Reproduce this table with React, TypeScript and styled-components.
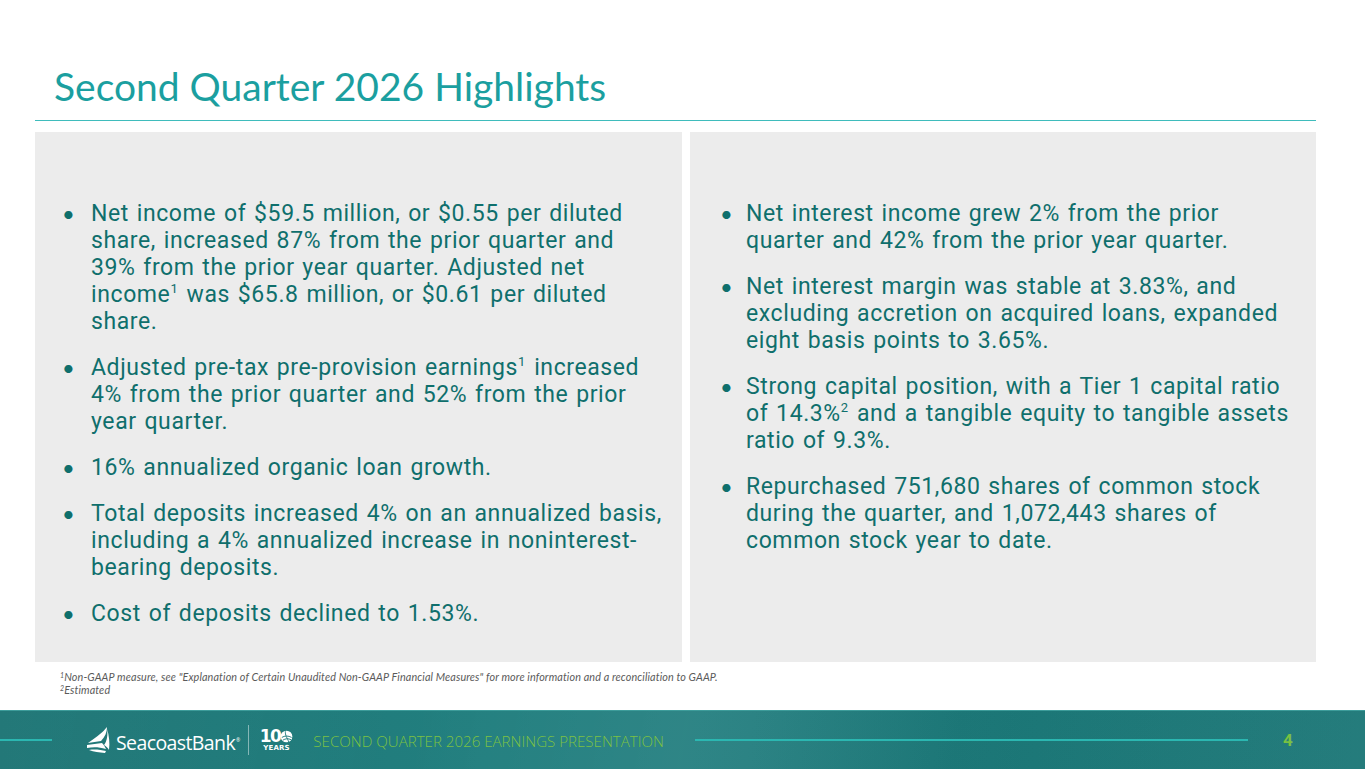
import React from "react";
import styled, { createGlobalStyle } from "styled-components";

const Global = createGlobalStyle`
  html, body { margin: 0; padding: 0; background: #ffffff; }
  body { font-family: Lato, "Open Sans", sans-serif; font-variant-ligatures: none; }
  * { box-sizing: border-box; }
`;

const Slide = styled.div`
  width: 1365px;
  height: 769px;
  display: flex;
  flex-direction: column;
  overflow: hidden;
  background: #ffffff;
`;

const Header = styled.header`
  margin: 0 49px 0 35px;
  height: 121px;
  display: flex;
  align-items: flex-end;
  padding: 0 0 10px 19px;
  border-bottom: 1.5px solid #3fbcbc;
`;

const Title = styled.h1`
  margin: 0;
  font-family: Lato, sans-serif;
  font-weight: 400;
  font-size: 39px;
  line-height: 47px;
  color: #1b9fa0;
`;

const Panels = styled.section`
  margin: 11px 49px 0 35px;
  height: 530px;
  display: grid;
  grid-template-columns: 647px 626px;
  gap: 8px;
`;

const Panel = styled.div<{ $pad: number }>`
  background: #ececec;
  padding: 68px 0 0 ${(p) => p.$pad}px;
  display: flex;
  flex-direction: column;
  gap: 19px;
`;

const Item = styled.div<{ $col: number }>`
  display: grid;
  grid-template-columns: ${(p) => p.$col}px 1fr;
  font-family: Roboto, Lato, sans-serif;
  font-size: 23px;
  line-height: 27px;
  letter-spacing: 0.6px;
  word-spacing: 1.5px;
  color: #0f6f6c;
  white-space: nowrap;
`;

const Bullet = styled.span`
  font-family: Lato, sans-serif;
  font-size: 22px;
  line-height: 27px;
`;

const Sup = styled.sup`
  font-size: 13px;
  line-height: 0;
  letter-spacing: 0;
  vertical-align: 9px;
  margin-right: 1px;
`;

const Notes = styled.div`
  margin: 8px 0 0 60px;
  font-family: Lato, sans-serif;
  font-style: italic;
  font-size: 10.8px;
  line-height: 13px;
  letter-spacing: 0.12px;
  color: #5a5a5a;
`;

const NoteSup = styled.sup`
  font-size: 7px;
  line-height: 0;
  vertical-align: 3px;
`;

const Footer = styled.footer`
  margin-top: auto;
  height: 59px;
  border-top: 1px solid #3d9c9a;
  background:
    linear-gradient(100deg, rgba(255,255,255,0.03) 0%, rgba(255,255,255,0) 30%, rgba(255,255,255,0.05) 50%, rgba(0,0,0,0.03) 70%, rgba(255,255,255,0.04) 100%),
    linear-gradient(90deg, #1c7474 0%, #227f7f 35%, #247f80 55%, #1b7979 75%, #1c7777 100%);
  display: flex;
  align-items: center;
`;

const Rule = styled.div<{ $w: number; $ml?: number }>`
  width: ${(p) => p.$w}px;
  margin-left: ${(p) => p.$ml ?? 0}px;
  height: 2px;
  background: #2bb7b1;
  flex: none;
`;

const Logo = styled.div`
  margin-left: 33px;
  display: flex;
  align-items: center;
  gap: 3px;
  color: #ffffff;
`;

const LogoWord = styled.span`
  font-family: "Open Sans", sans-serif;
  font-size: 19.5px;
  font-weight: 500;
  letter-spacing: -0.6px;
  color: #ffffff;
  position: relative;
  top: 2px;
`;

const Tm = styled.span`
  font-size: 5px;
  vertical-align: 8px;
  margin-left: 1px;
`;

const Divider = styled.div`
  width: 1px;
  height: 30px;
  background: rgba(255,255,255,0.45);
  margin: 0 8px 0 5px;
`;

const Years = styled.div`
  display: flex;
  flex-direction: column;
  align-items: center;
  color: #ffffff;
  font-family: "DejaVu Sans", sans-serif;
  font-weight: 700;
`;

const YearsNum = styled.div`
  display: flex;
  align-items: center;
  font-size: 17px;
  line-height: 16px;
  letter-spacing: -1.5px;
`;

const YearsLabel = styled.div`
  font-size: 7px;
  line-height: 8px;
  letter-spacing: 0.2px;
`;

const FooterTitle = styled.span`
  margin-left: 20px;
  font-family: "Open Sans", sans-serif;
  font-weight: 300;
  font-size: 15.1px;
  color: #7cc143;
  white-space: nowrap;
  position: relative;
  top: 1px;
`;

const PageNum = styled.span`
  margin-left: 35px;
  font-family: "Liberation Sans Narrow", "Roboto", sans-serif;
  font-weight: 700;
  font-size: 17px;
  color: #78c043;
`;

const Sail = () => (
  <svg width="28" height="28" viewBox="0 0 28 28" aria-hidden="true">
    <path d="M22 1 C18 6 13 10 3 17 L16 15 C20 11 22 6 22 1 Z" fill="#ffffff" />
    <path d="M2 19 L17 17 C19 19 20 21 21 23 C14 21 8 21 2 22 Z" fill="#ffffff" />
    <path d="M22 3 C23 9 22 15 19 19 C21 20 23 22 24 24 C25 17 24 9 22 3 Z" fill="#ffffff" />
    <path d="M4 24 C10 23 16 24 21 25 L20 27 C14 26 9 26 4 24 Z" fill="#ffffff" />
  </svg>
);

const Globe = () => (
  <svg width="13" height="13" viewBox="0 0 14 14" aria-hidden="true">
    <circle cx="7" cy="7" r="6.3" fill="#ffffff" />
    <path d="M2 8 C5 6 9 6 12.5 8 M3 11 C6 9 9 9 12 10.5 M6 1.5 C5 5 8 9 9.5 13" stroke="#1f7a7a" strokeWidth="1" fill="none" />
  </svg>
);

const left = [
  [
    "Net income of $59.5 million, or $0.55 per diluted",
    "share, increased 87% from the prior quarter and",
    "39% from the prior year quarter. Adjusted net",
    <>income<Sup>1</Sup> was $65.8 million, or $0.61 per diluted</>,
    "share.",
  ],
  [
    <>Adjusted pre-tax pre-provision earnings<Sup>1</Sup> increased</>,
    "4% from the prior quarter and 52% from the prior",
    "year quarter.",
  ],
  ["16% annualized organic loan growth."],
  [
    "Total deposits increased 4% on an annualized basis,",
    "including a 4% annualized increase in noninterest-",
    "bearing deposits.",
  ],
  ["Cost of deposits declined to 1.53%."],
];

const right = [
  ["Net interest income grew 2% from the prior", "quarter and 42% from the prior year quarter."],
  [
    "Net interest margin was stable at 3.83%, and",
    "excluding accretion on acquired loans, expanded",
    "eight basis points to 3.65%.",
  ],
  [
    "Strong capital position, with a Tier 1 capital ratio",
    <>of 14.3%<Sup>2</Sup> and a tangible equity to tangible assets</>,
    "ratio of 9.3%.",
  ],
  [
    "Repurchased 751,680 shares of common stock",
    "during the quarter, and 1,072,443 shares of",
    "common stock year to date.",
  ],
];

const renderItems = (items: React.ReactNode[][], col: number) =>
  items.map((lines, i) => (
    <Item key={i} $col={col}>
      <Bullet>•</Bullet>
      <span>
        {lines.map((l, j) => (
          <React.Fragment key={j}>
            {l}
            {j < lines.length - 1 && <br />}
          </React.Fragment>
        ))}
      </span>
    </Item>
  ));

export default function App() {
  return (
    <>
      <Global />
      <Slide>
        <Header>
          <Title>Second Quarter 2026 Highlights</Title>
        </Header>
        <Panels>
          <Panel $pad={27}>{renderItems(left, 29)}</Panel>
          <Panel $pad={30}>{renderItems(right, 26)}</Panel>
        </Panels>
        <Notes>
          <NoteSup>1</NoteSup>Non-GAAP measure, see "Explanation of Certain Unaudited Non-GAAP Financial Measures" for more information and a reconciliation to GAAP.
          <br />
          <NoteSup>2</NoteSup>Estimated
        </Notes>
        <Footer>
          <Rule $w={52} />
          <Logo>
            <Sail />
            <LogoWord>
              SeacoastBank<Tm>®</Tm>
            </LogoWord>
            <Divider />
            <Years>
              <YearsNum>
                10
                <Globe />
              </YearsNum>
              <YearsLabel>YEARS</YearsLabel>
            </Years>
          </Logo>
          <FooterTitle>SECOND QUARTER 2026 EARNINGS PRESENTATION</FooterTitle>
          <Rule $w={553} $ml={31} />
          <PageNum>4</PageNum>
        </Footer>
      </Slide>
    </>
  );
}
